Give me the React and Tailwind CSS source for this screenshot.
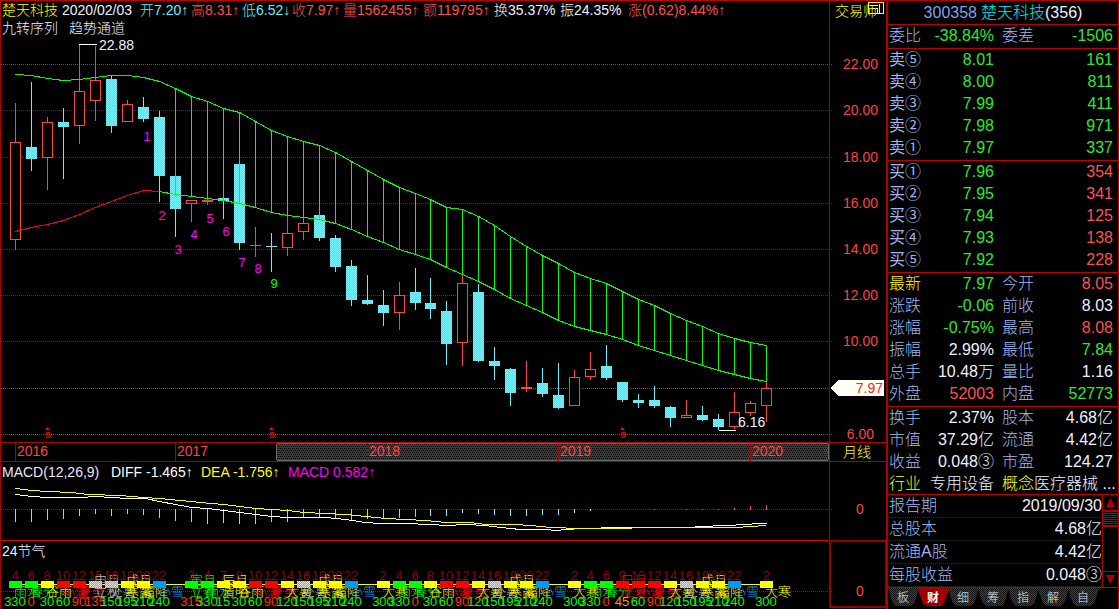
import React from "react";

const xAt = (i) => (i <= 25 ? 15 : 14) + 16 * i;

// [rising, high, bodyTop, bodyBottom, low]
const CANDLES = [
  [1, 103, 142, 239, 249], [0, 82, 147, 158, 170], [1, 117, 122, 157, 189], [0, 108, 122, 126, 178],
  [1, 44, 91, 125, 143], [1, 46, 80, 100, 120], [0, 76, 79, 125, 132], [1, 100, 104, 121, 121],
  [0, 97, 107, 118, 121], [0, 111, 117, 175, 201], [0, 176, 176, 208, 236], [1, 200, 200, 203, 221],
  [1, 199, 200, 201, 204], [0, 197, 198, 200, 218], [0, 164, 164, 242, 249], [1, 227, 245, 245, 256],
  [0, 233, 246, 246, 271], [1, 216, 233, 247, 255], [1, 216, 223, 231, 239], [0, 215, 215, 237, 240],
  [0, 235, 238, 266, 271], [0, 260, 266, 299, 305], [0, 275, 300, 303, 304], [0, 290, 305, 312, 325],
  [1, 282, 295, 312, 329], [0, 268, 292, 302, 309], [0, 278, 303, 308, 318], [0, 301, 311, 343, 364],
  [1, 275, 283, 342, 365], [0, 284, 292, 360, 361], [0, 347, 361, 365, 379], [0, 368, 369, 392, 405],
  [1, 361, 387, 388, 391], [0, 368, 383, 393, 396], [0, 363, 395, 407, 408], [1, 370, 377, 405, 405],
  [1, 352, 369, 376, 379], [0, 345, 366, 377, 379], [0, 382, 382, 399, 401], [0, 394, 400, 402, 407],
  [0, 386, 400, 405, 407], [0, 406, 407, 417, 426], [1, 400, 415, 417, 417], [0, 406, 415, 419, 420],
  [0, 414, 419, 426, 429], [1, 392, 412, 426, 428], [1, 401, 403, 412, 415], [1, 382, 388, 405, 421],
];

const UPPER = [
  74, 75, 78, 80, 79, 77, 75, 75, 77, 81, 88, 96, 101, 108, 112, 121, 130, 136, 141, 145, 152, 161, 170, 179,
  187, 193, 199, 207, 209, 216, 225, 236, 246, 255, 263, 272, 278, 283, 291, 299, 305, 313, 320, 326, 333,
  338, 342, 345,
];
const LOWER = [
  231, 227, 224, 220, 214, 207, 201, 195, 190, 191, 194, 196, 198, 200, 203, 207, 212, 215, 217, 219, 223,
  229, 236, 242, 249, 254, 259, 267, 274, 281, 289, 298, 305, 312, 320, 326, 330, 334, 339, 345, 350, 355,
  360, 365, 370, 374, 378, 381,
];

const COUNTS = [
  [1, 147, 136], [2, 162, 215], [3, 178, 249], [4, 194, 234], [5, 210, 218],
  [6, 226, 231], [7, 242, 262], [8, 258, 268], [9, 274, 283],
];

const GRID = [
  [64, "22.00", 1], [110, "20.00"], [157, "18.00"], [203, "16.00"], [249, "14.00"],
  [295, "12.00"], [341, "10.00"], [388, null, 1], [434, "6.00", 1],
];

const YEARS = [[15, "2016"], [175, "2017"], [367, "2018"], [558, "2019"], [750, "2020"]];

const DIFF_BARS = [
  522, 522, 520, 519, 516, 514, 516, 514, 515, 518, 521, 522, 524, 523, 524, 524, 522, 522, 518, 517, 518,
  520, 519, 519, 518, 517, 516, 516, 513, 514, 515, 516, 516, 515, 515, 513, 511,
];
const UP_BARS = [[40, 509], [42, 509], [43, 509], [44, 509], [45, 508], [46, 506], [47, 505]];

const DEA_LINE =
  "15,488 31,490 47,491 71,492 88,494 120,495 143,497 159,498 180,500 200,502 223,504 239,506 255,508 271,509 287,510 303,512 325,513 345,514 365,516 385,518 405,519 425,520 446,522 470,522 485,524 515,524 530,525 550,527 580,528 630,528 632,527 735,527 750,526 766,525";
const DIFF_LINE =
  "15,494 31,496 47,497 80,497 95,496 111,497 127,498 145,498 159,501 175,504 191,507 207,508 223,510 239,512 255,514 271,516 287,517 325,517 345,519 365,522 380,523 405,523 430,524 446,525 465,524 485,525 500,527 520,529 545,529 555,530 566,529 582,528 620,527 690,527 700,526 726,525 745,524 758,523 766,523";

const G = "#00ff00";
const Y = "#ffff00";
const R = "#ff0000";
const S = "#c0c0c0";
const B = "#0099ff";
const TERM = {
  300: ["大寒", Y], 315: ["立春", G, "寅月"], 330: ["雨水", G], 0: ["春分", G], 15: ["清明", Y, "辰月"],
  30: ["谷雨", Y], 45: ["立夏", R, "巳月"], 60: ["小满", R], 90: ["夏至", R], 120: ["大暑", Y],
  135: ["立秋", S, "申月"], 150: ["处暑", S], 195: ["寒露", Y, "戌月"], 210: ["霜降", Y], 240: ["小雪", B],
};
const RED_ANGLES = [0, 90, 135, 315];
// [index, number, angle]
const TERMS = [
  [0, 4, 330], [1, 6, 0], [2, 8, 30], [3, 10, 60], [4, 12, 90], [5, 15, 135], [6, 16, 150], [7, 19, 195],
  [8, 20, 210], [9, 22, 240], [11, 3, 315], [12, 4, 330], [13, 7, 15], [14, 8, 30], [15, 10, 60],
  [16, 12, 90], [17, 14, 120], [18, 16, 150], [19, 19, 195], [20, 20, 210], [21, 22, 240], [23, 2, 300],
  [24, 4, 330], [25, 6, 0], [26, 8, 30], [27, 10, 60], [28, 12, 90], [29, 14, 120], [30, 16, 150],
  [31, 19, 195], [32, 20, 210], [33, 22, 240], [35, 2, 300], [36, 4, 330], [37, 6, 0], [38, 9, 45],
  [39, 10, 60], [40, 12, 90], [41, 14, 120], [42, 16, 150], [43, 19, 195], [44, 20, 210], [45, 22, 240],
  [47, 2, 300],
];

const points = (ys, from = 0) => ys.map((y, i) => `${xAt(i + from) + 0.5},${y + 0.5}`).join(" ");

function Patterns() {
  return (
    <svg className="absolute size-0" aria-hidden="true">
      <defs>
        <pattern id="cyan" width="2" height="2" patternUnits="userSpaceOnUse">
          <rect width="2" height="2" fill="#4ae4fb" />
          <path d="M0 0h1v1h-1zM1 1h1v1h-1z" fill="#74f2fc" />
        </pattern>
        <pattern id="slider" width="4" height="4" patternUnits="userSpaceOnUse">
          <rect width="4" height="4" fill="#3c3c3c" />
          <path d="M0 0h1v1h-1zM2 0h1v1h-1zM1 2h1v1h-1zM3 2h1v1h-1z" fill="#000" />
        </pattern>
        <pattern id="grey" width="2" height="2" patternUnits="userSpaceOnUse">
          <rect width="2" height="2" fill="#a8a8a8" />
          <path d="M0 0h1v1h-1zM1 1h1v1h-1z" fill="#d8d8d8" />
        </pattern>
        <pattern id="tab" width="2" height="2" patternUnits="userSpaceOnUse">
          <rect width="2" height="2" fill="#121212" />
          <path d="M0 0h1v1h-1zM1 1h1v1h-1z" fill="#404040" />
        </pattern>
      </defs>
    </svg>
  );
}

function Candle({ i, data }) {
  const [up, hi, top, bot, lo] = data;
  const x = xAt(i);
  if (!up) {
    return (
      <g>
        <rect x={x} y={hi} width="1" height={lo - hi + 1} fill="#5ff0ff" />
        <rect x={x - 5} y={top} width="11" height={bot - top + 1} fill="url(#cyan)" />
      </g>
    );
  }
  return (
    <g>
      <rect x={x} y={hi} width="1" height={lo - hi + 1} fill="#ff4444" />
      {bot - top < 2 ? (
        <rect x={x - 5} y={top} width="11" height={bot - top + 1} fill="#ff4444" />
      ) : (
        <rect x={x - 4.5} y={top + 0.5} width="10" height={bot - top} fill="#000" stroke="#ff4444" />
      )}
    </g>
  );
}

function PriceChart() {
  return (
    <svg viewBox="1 38 885 404" className="block h-auto w-full text-[14px]" role="img" aria-label="月线">
      <g shapeRendering="crispEdges" fill="none">
        {GRID.map(([y, , bright]) => (
          <line key={y} x1="1" x2="833" y1={y + 0.5} y2={y + 0.5} stroke={bright ? "#ff1010" : "#c80000"} strokeDasharray="1 1" />
        ))}
        <line x1="829.5" x2="829.5" y1="38" y2="442" stroke="#a80000" />
        {CANDLES.map((c, i) => <Candle key={i} i={i} data={c} />)}
        <polyline points={points(LOWER.slice(0, 10))} stroke="#ff0000" />
        <polyline points={points(LOWER.slice(9), 9)} stroke="#00ff00" />
        <polyline points={points(UPPER)} stroke="#00ff00" />
        {UPPER.map((u, i) =>
          i > 9 ? <rect key={i} x={xAt(i)} y={u} width="1" height={LOWER[i] - u + 1} fill="#00ff00" /> : null
        )}
        <path d="M79 44.5H97M719 430.5H736" stroke="#fff" />
        <path d="M830 388L838 380H884V396H838Z" fill="#fffff4" />
      </g>
      <text x="99" y="50" fill="#f0f0ff">22.88</text>
      <text x="738" y="427" fill="#f0f0ff">6.16</text>
      <text x="883" y="393" textAnchor="end" fill="#ff2020">7.97</text>
      {GRID.map(([y, label]) =>
        label ? <text key={y} x={label.length < 5 ? 874 : 878} y={y + 5} textAnchor="end" fill="#ff4444">{label}</text> : null
      )}
      {COUNTS.map(([n, x, y]) => (
        <text key={n} x={x} y={y + 5} textAnchor="middle" className="text-[13px]" fill={n === 9 ? "#00ff00" : "#ff00ff"}>{n}</text>
      ))}
      {[47, 271, 622].map((x) => (
        <g key={x} fill="#ff0000">
          <path d={`M${x - 2} 430L${x + 0.5} 427L${x + 3} 430Z`} />
          <text x={x + 1} y="438" textAnchor="middle" className="text-[9px] font-bold">S</text>
        </g>
      ))}
    </svg>
  );
}

function TimeAxis() {
  return (
    <svg viewBox="1 442 885 19" className="block h-auto w-full text-[14px]" role="img" aria-label="时间轴">
      <g shapeRendering="crispEdges">
        <rect x="276.5" y="443.5" width="552" height="17" rx="2" fill="url(#slider)" stroke="#6a6a6a" />
        <path d="M1 442.5H886M829.5 442V461" stroke="#b40000" />
        {YEARS.map(([x]) => <line key={x} x1={x + 0.5} x2={x + 0.5} y1="443" y2="461" stroke="#a80000" />)}
      </g>
      {YEARS.map(([x, y]) => <text key={x} x={x + 2} y="456" fill="#ff4444">{y}</text>)}
      <text x="857" y="457" textAnchor="middle" fill="#ffff00">月线</text>
    </svg>
  );
}

function MacdPane() {
  return (
    <svg viewBox="1 461 885 79" className="block h-auto w-full text-[14px]" role="img" aria-label="MACD">
      <g shapeRendering="crispEdges" fill="none">
        <path d="M1 461.5H886M829.5 461V540" stroke="#a80000" />
        <line x1="1" x2="833" y1="509.5" y2="509.5" stroke="#c80000" strokeDasharray="1 1" />
        {DIFF_BARS.map((y, i) => <rect key={i} x={xAt(i)} y="509" width="1" height={y - 509} fill="#5ff0ff" />)}
        {UP_BARS.map(([i, y]) => <rect key={i} x={xAt(i)} y={y} width="1" height={510 - y} fill="#ff4444" />)}
        <polyline points={DIFF_LINE} stroke="#ffffff" transform="translate(0.5 0.5)" />
        <polyline points={DEA_LINE} stroke="#ffff00" transform="translate(0.5 0.5)" />
      </g>
      <text x="2" y="477" fill="#e8e8ff">MACD(12,26,9)</text>
      <text x="111" y="477" fill="#ffffff">DIFF -1.465↑</text>
      <text x="201" y="477" fill="#ffff00">DEA -1.756↑</text>
      <text x="288" y="477" fill="#ff00ff">MACD 0.582↑</text>
      <text x="860" y="514" textAnchor="middle" fill="#ff4444">0</text>
    </svg>
  );
}

function SolarTermsPane() {
  return (
    <svg viewBox="1 540 885 68" className="block h-auto w-full text-[13px]" role="img" aria-label="24节气">
      <g shapeRendering="crispEdges" fill="none">
        <path d="M1 540.5H829" stroke="#e00000" />
        <rect x="830" y="541" width="56" height="66" stroke="#980000" strokeWidth="2" />
        <line x1="1" x2="833" y1="591.5" y2="591.5" stroke="#c80000" strokeDasharray="1 1" />
        <line x1="9" x2="766" y1="584.5" y2="584.5" stroke="#ffff00" />
      </g>
      <text x="2" y="556" fill="#f0f0ff" className="text-[14px]">24节气</text>
      {TERMS.map(([i, n, a]) => {
        const x = xAt(i);
        const [name, color, month] = TERM[a];
        return (
          <g key={i}>
            <text x={x} y="580" textAnchor="middle" fill="#900000">{n}</text>
            {month && <text x={x - 1} y="585" fill={color}>{month}</text>}
            <text x={x - 1} y="596" fill={color}>{name}</text>
            <rect x={x - 6} y="581" width="13" height="7" fill={color === S ? "url(#grey)" : color} />
            <text x={x} y="606" textAnchor="middle" fill={a === 45 ? "#ff9900" : RED_ANGLES.includes(a) ? "#ff3300" : G}>{a}</text>
          </g>
        );
      })}
      <text x="860" y="596" textAnchor="middle" fill="#ff4444" className="text-[14px]">0</text>
    </svg>
  );
}

const RED = "text-[#ff5050]";
const GRN = "text-[#30e830]";
const WHT = "text-[#f0f0ff]";
const LBL = "text-[#a0b8f0]";
const YEL = "text-[#ffff00]";

const HEADER = [
  ["楚天科技", YEL], ["2020/02/03", WHT], ["开7.20↑", "text-[#60f0ff]"], ["高8.31↑", RED], ["低6.52↓", "text-[#60f0ff]"],
  ["收7.97↑", RED], ["量1562455↑", RED], ["额119795↑", RED], ["换35.37%", WHT], ["振24.35%", WHT], ["涨(0.62)8.44%↑", RED],
];

function ChartHeader() {
  return (
    <header className="flex h-[38px] border-t border-[#c00000] text-[14px]">
      <div className="min-w-0 flex-1 pl-px">
        <div className="grid grid-cols-[60px_78px_51px_51px_50px_51px_80px_71px_66px_68px_1fr] whitespace-nowrap leading-[18px]">
          {HEADER.map(([t, c]) => <span key={t} className={c}>{t}</span>)}
        </div>
        <div className={`flex gap-[11px] leading-[18px] ${WHT}`}>
          <span>九转序列</span>
          <span>趋势通道</span>
        </div>
      </div>
      <div className="relative w-[57px] border-l border-[#a80000] pl-[5px]">
        <button className="leading-[20px] text-[#ffff00]">交易师</button>
        <svg className="absolute right-[2px] top-px" width="16" height="14" fill="none" stroke="#ffff00" shapeRendering="crispEdges" aria-hidden="true">
          <path d="M0.5 0.5H15.5V11.5H0.5ZM11.5 2V12M2 3.5H10M4 6.5H9.5V11" />
        </svg>
      </div>
    </header>
  );
}

function OrderBook({ side, marks, color, rows }) {
  return (
    <div className="border-b border-[#c00000] pb-px">
      <table className="w-full table-fixed">
        <tbody>
          {rows.map(([price, vol], i) => (
            <tr key={price} className="h-[22px]">
              <th scope="row" className={`w-[43px] pl-px text-left font-normal ${LBL}`}>{side}{marks[i]}</th>
              <td className={`w-[63px] text-right ${GRN}`}>{price}</td>
              <td className={`pr-[5px] text-right ${color}`}>{vol}</td>
            </tr>
          ))}
        </tbody>
      </table>
    </div>
  );
}

function Pairs({ rows, className }) {
  return (
    <div className={className}>
      {rows.map(([l1, v1, c1, l2, v2, c2, lc]) => (
        <dl key={l1} className="grid h-[22px] grid-cols-[36px_69px_40px_1fr] whitespace-nowrap pl-px pr-[5px] leading-[22px]">
          <dt className={lc || LBL}>{l1}</dt>
          <dd className={`text-right ${c1}`}>{v1}</dd>
          <dt className={`pl-2 ${LBL}`}>{l2}</dt>
          <dd className={`text-right ${c2}`}>{v2}</dd>
        </dl>
      ))}
    </div>
  );
}

const REPORT = [["报告期", "2019/09/30"], ["总股本", "4.68亿"], ["流通A股", "4.42亿"], ["每股收益", "0.048③"]];

function QuotePanel() {
  return (
    <aside className="w-[233px] shrink-0 border-l-2 border-r border-t border-[#b00000] text-[16px] leading-[22px]">
      <h1 className={`flex h-[24px] items-center justify-center gap-1 border-b border-[#c00000] ${WHT}`}>
        <span className="text-[#80a0e8]">300358</span>
        <span><span className="text-[#00e8f8]">楚天科技</span>(356)</span>
      </h1>
      <Pairs className="border-b border-[#c00000] pb-px" rows={[["委比", "-38.84%", GRN, "委差", "-1506", GRN]]} />
      <OrderBook side="卖" marks="⑤④③②①" color={GRN} rows={[["8.01", 161], ["8.00", 811], ["7.99", 411], ["7.98", 971], ["7.97", 337]]} />
      <OrderBook side="买" marks="①②③④⑤" color={RED} rows={[["7.96", 354], ["7.95", 341], ["7.94", 125], ["7.93", 138], ["7.92", 228]]} />
      <Pairs
        className="border-b border-[#c00000] pb-px"
        rows={[
          ["最新", "7.97", GRN, "今开", "8.05", RED, YEL],
          ["涨跌", "-0.06", GRN, "前收", "8.03", WHT],
          ["涨幅", "-0.75%", GRN, "最高", "8.08", RED],
          ["振幅", "2.99%", WHT, "最低", "7.84", GRN],
          ["总手", "10.48万", WHT, "量比", "1.16", WHT],
          ["外盘", "52003", RED, "内盘", "52773", GRN],
        ]}
      />
      <Pairs
        rows={[
          ["换手", "2.37%", WHT, "股本", "4.68亿", WHT],
          ["市值", "37.29亿", WHT, "流通", "4.42亿", WHT],
          ["收益", "0.048③", WHT, "市盈", "124.27", WHT],
        ]}
      />
      <div className="flex h-[22px] whitespace-nowrap border-b border-[#c00000] pl-px pr-[5px] leading-[21px]">
        <a href="#industry" className="flex w-[113px] gap-[9px]">
          <span className={YEL}>行业</span><span className={WHT}>专用设备</span>
        </a>
        <a href="#concept" className={`min-w-0 flex-1 ${WHT}`}><span className={YEL}>概念</span>医疗器械 ...</a>
      </div>
      <div className="flex border-b border-[#c00000]">
        <dl className="min-w-0 flex-1">
          {REPORT.map(([k, v]) => (
            <div key={k} className="flex h-[23px] justify-between border-b border-dotted border-[#900000] pl-px">
              <dt className={LBL}>{k}</dt>
              <dd className={WHT}>{v}</dd>
            </div>
          ))}
        </dl>
        <div className="flex w-[16px] flex-col border-l border-[#b00000]">
          <button aria-label="向上" className="flex h-[15px] items-center justify-center">
            <svg width="9" height="9" aria-hidden="true"><path d="M4.5 0L9 9H0Z" fill="#b00000" /></svg>
          </button>
          <svg viewBox="0 0 15 18" className="w-full" fill="none" stroke="#b00000" shapeRendering="crispEdges" aria-hidden="true">
            <path d="M0 0.5H15M0 1.5H15M0 3.5H15M0 5.5H15M0 7.5H15M0 9.5H15M0 11.5H15M0 13.5H15M0 15.5H15M0 16.5H15" />
          </svg>
          <button aria-label="向下" className="mt-auto flex h-[16px] items-center justify-center border-t border-[#b00000]">
            <svg width="9" height="9" aria-hidden="true"><path d="M4.5 9L9 0H0Z" fill="#b00000" /></svg>
          </button>
        </div>
      </div>
      <nav className="flex text-[12px]">
        {["板", "财", "细", "筹", "指", "解", "自"].map((t) => (
          <button key={t} className={`relative h-[19px] w-[30px] leading-[18px] ${t === "财" ? "z-10 font-bold text-white" : "text-[#d0e8f8]"}`}>
            <svg viewBox="0 0 33 18" className="absolute -left-px top-0 h-[18px] w-[33px]" aria-hidden="true">
              <path d="M0 0H33C30 4 30 8 28 13Q26 18 22 18H11Q7 18 5 13C3 8 3 4 0 0Z" fill={t === "财" ? "#a00000" : "url(#tab)"} />
            </svg>
            <span className="relative">{t}</span>
          </button>
        ))}
      </nav>
    </aside>
  );
}

export default function App() {
  return (
    <div className="flex min-h-screen bg-black font-['Liberation_Sans','Noto_Sans_CJK_SC',sans-serif] font-light">
      <Patterns />
      <main className="min-w-0 flex-1 border-l border-[#b00000]">
        <ChartHeader />
        <PriceChart />
        <TimeAxis />
        <MacdPane />
        <SolarTermsPane />
      </main>
      <QuotePanel />
    </div>
  );
}
